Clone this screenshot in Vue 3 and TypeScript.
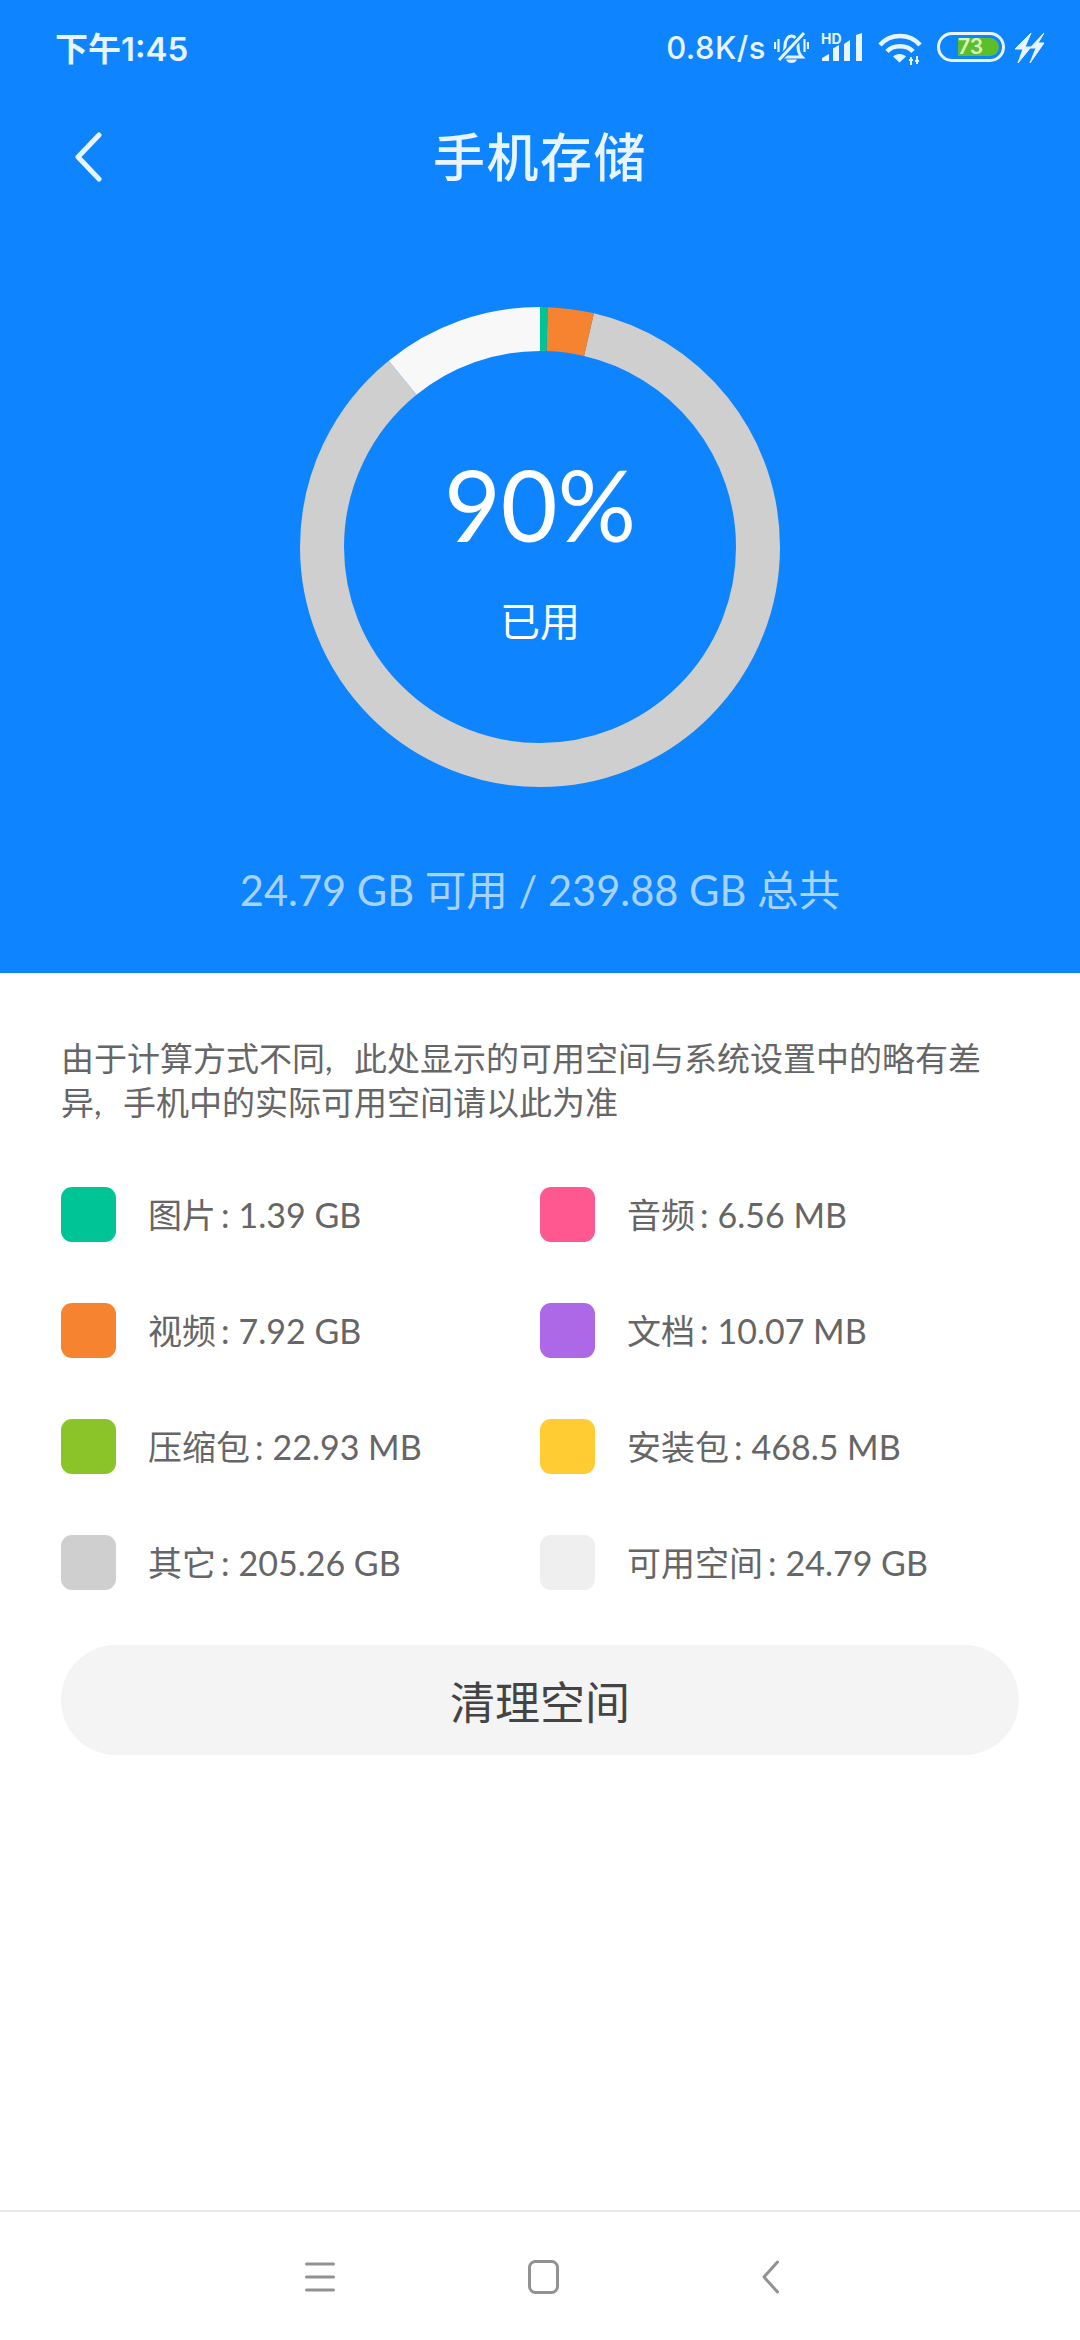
<script setup lang="ts">
interface Seg { color: string; from: number; to: number }
const R = 218
const C = 2 * Math.PI * R
const segs: Seg[] = [
  { color: '#cfcfcf', from: 13, to: 320.8 },
  { color: '#f8f8f8', from: 320.8, to: 360 },
  { color: '#f5832f', from: 1.9, to: 13 },
  { color: '#00c495', from: 0, to: 1.9 },
]
const dash = (s: Seg) => `${((s.to - s.from) / 360) * C} ${C}`
const offset = (s: Seg) => `${-(s.from / 360) * C}`
const legend = [
  { name: '图片', value: '1.39 GB', color: '#00c495' },
  { name: '音频', value: '6.56 MB', color: '#ff5790' },
  { name: '视频', value: '7.92 GB', color: '#f5832f' },
  { name: '文档', value: '10.07 MB', color: '#ad68e8' },
  { name: '压缩包', value: '22.93 MB', color: '#8bc428' },
  { name: '安装包', value: '468.5 MB', color: '#ffcd33' },
  { name: '其它', value: '205.26 GB', color: '#cfcfcf' },
  { name: '可用空间', value: '24.79 GB', color: '#efefef' },
]
</script>

<template>
  <div class="page">
    <section class="top">
      <div class="status">
        <span class="time">下午1:45</span>
        <div class="status-right">
          <span class="speed">0.8K/s</span>
          <svg class="ic bell" width="35" height="33" viewBox="0 0 35 33" fill="none" stroke="#e8f4ff" stroke-width="3">
            <path d="M7 26c3-3 4-6 4-11 0-6 3-10 6.500-10S24 9 24 15c0 5 1 8 4 11z" />
            <path d="M12 28.500h11c-1 2.500-3 3.500-5.500 3.500S13 31 12 28.500z" fill="#e8f4ff" stroke="none" />
            <path d="M4.500 8v13M30.500 8v13M1 11v7M34 11v7" stroke-width="2.200" />
            <path d="M4 30 30 2" stroke="#0e85ff" stroke-width="6" />
            <path d="M5 29 30 2" stroke-width="3" />
          </svg>
          <div class="sig">
            <span class="hd">HD</span>
            <svg class="ic" width="42" height="30" viewBox="0 0 42 30" fill="#e8f4ff">
              <path d="M1 29v-3l7-4v7zM12 29V16.500l6-3.500v16zM23 29V12l6-4v21zM35 29V3l6-2v28z" />
            </svg>
          </div>
          <svg class="ic wifi" width="44" height="32" viewBox="0 0 44 32" fill="none" stroke="#e8f4ff" stroke-width="4.500">
            <path d="M2 12C12 0 32 0 42 12M9 18.500c6-7 20-7 26 0" />
            <path d="M15 23.500c3-3.500 10-3.500 13 0l-6.500 6z" fill="#e8f4ff" stroke="none" />
            <path d="M33 24v8M31 27h4M39 23v8M37 28h4" stroke-width="2" />
          </svg>
          <div class="battery"><div class="battery-fill"></div><span>73</span></div>
          <svg class="ic bolt" width="29" height="30" viewBox="0 0 29 30" fill="#e8f4ff">
            <path d="M16 0 0 16h8L3 30 16 14H10zM29 0 15 15h6l-6 15 14-20h-6z" stroke="#e8f4ff" stroke-width="1" />
          </svg>
        </div>
      </div>
      <header class="title-row">
        <svg class="back" width="28" height="50" viewBox="0 0 28 50" fill="none" stroke="#e8f4ff" stroke-width="5" stroke-linecap="round" stroke-linejoin="round">
          <path d="M25 3 4 25l21 22" />
        </svg>
        <h1>手机存储</h1>
      </header>
      <div class="ring">
        <svg width="480" height="480" viewBox="0 0 480 480">
          <circle
            v-for="s in segs"
            :key="s.color"
            cx="240"
            cy="240"
            :r="R"
            fill="none"
            :stroke="s.color"
            stroke-width="44"
            :stroke-dasharray="dash(s)"
            :stroke-dashoffset="offset(s)"
            transform="rotate(-90 240 240)"
          />
        </svg>
        <div class="ring-center">
          <div class="pct">90%</div>
          <div class="used">已用</div>
        </div>
      </div>
      <p class="summary">24.79 GB 可用 / 239.88 GB 总共</p>
    </section>

    <main class="body">
      <p class="note">由于计算方式不同, 此处显示的可用空间与系统设置中的略有差异, 手机中的实际可用空间请以此为准</p>
      <div class="legend">
        <div v-for="item in legend" :key="item.name" class="item">
          <i class="swatch" :style="{ background: item.color }"></i>
          <span class="item-text">{{ item.name }}<span class="colon">:</span>{{ item.value }}</span>
        </div>
      </div>
      <button class="clean">清理空间</button>
    </main>

    <nav class="nav">
      <svg width="30" height="32" viewBox="0 0 30 32" fill="none" stroke="#929292" stroke-width="3" stroke-linecap="round">
        <path d="M1.500 3h27M1.500 16h27M1.500 29h27" />
      </svg>
      <svg width="31" height="34" viewBox="0 0 31 34" fill="none" stroke="#929292" stroke-width="3">
        <rect x="1.500" y="1.500" width="28" height="31" rx="6" />
      </svg>
      <svg width="17" height="34" viewBox="0 0 17 34" fill="none" stroke="#929292" stroke-width="3" stroke-linecap="round" stroke-linejoin="round">
        <path d="M15.500 2 2 17l13.500 15" />
      </svg>
    </nav>
  </div>
</template>

<style>
html, body { margin: 0; background: #fff; }
</style>

<style scoped>
.page {
  width: 1080px;
  height: 2340px;
  display: flex;
  flex-direction: column;
  font-family: Lato, "Noto Sans CJK SC", sans-serif;
  background: #fff;
  overflow: hidden;
}
.top {
  height: 973px;
  background: #0e85ff;
  display: flex;
  flex-direction: column;
  align-items: center;
  color: #fff;
  flex: none;
}
.status {
  width: 100%;
  box-sizing: border-box;
  height: 96px;
  padding: 0 36px 0 55px;
  display: flex;
  align-items: center;
  justify-content: space-between;
  color: #e8f4ff;
}
.time {
  font-family: Inter, "Noto Sans CJK SC", sans-serif;
  font-size: 33px;
  font-weight: 600;
  margin-top: -3px;
}
.status-right { display: flex; align-items: center; }
.speed {
  font-family: Inter, sans-serif;
  font-size: 31px;
  font-weight: 500;
  letter-spacing: 0.5px;
  margin-right: 8px;
  margin-top: -2px;
}
.ic { display: block; }
.bell { margin-right: 12px; margin-top: -2px; }
.sig { position: relative; margin-right: 15px; margin-top: -3px; }
.hd {
  position: absolute;
  left: 0;
  top: 1px;
  font-family: Inter, sans-serif;
  font-size: 14px;
  line-height: 12px;
  font-weight: 700;
  color: #e8f4ff;
}
.wifi { margin-right: 15px; margin-top: 2px; }
.battery {
  position: relative;
  width: 68px;
  height: 30px;
  box-sizing: border-box;
  border: 3px solid #e8f4ff;
  border-radius: 15px;
  margin-right: 10px;
  margin-top: -2px;
}
.battery-fill {
  position: absolute;
  left: 18px;
  top: 3px;
  bottom: 3px;
  right: 3px;
  background: #5cbf2a;
  border-radius: 0 10px 10px 0;
}
.battery span {
  position: absolute;
  left: 18px;
  top: 0;
  line-height: 24px;
  font-family: Inter, sans-serif;
  font-size: 21px;
  font-weight: 600;
  color: #d8f5c0;
}
.title-row {
  position: relative;
  width: 100%;
  height: 122px;
  display: flex;
  align-items: center;
  justify-content: center;
}
.back { position: absolute; left: 74px; top: 36px; }
h1 {
  margin: 0 0 6px;
  font-size: 52px;
  font-weight: 500;
  color: #e8f4ff;
  letter-spacing: 1.5px;
}
.ring {
  position: relative;
  width: 480px;
  height: 480px;
  margin-top: 89px;
}
.ring svg { display: block; }
.ring-center {
  position: absolute;
  inset: 0;
  display: flex;
  flex-direction: column;
  align-items: center;
}
.pct { margin-top: 137px; font-size: 98px; line-height: 120px; color: #fff; }
.used { margin-top: 32px; font-size: 40px; line-height: 50px; color: #fff; }
.summary {
  margin: 73px 0 0;
  font-size: 41.600px;
  line-height: 60px;
  color: #a9d3ff;
}
.body {
  flex: 1;
  padding: 64px 61px 0;
  color: #666;
}
.note {
  margin: 0;
  max-width: 930px;
  font-size: 33px;
  line-height: 43.500px;
  word-spacing: 13px;
  color: #666;
}
.legend {
  display: grid;
  grid-template-columns: 479px 1fr;
  grid-auto-rows: 55px;
  row-gap: 61px;
  margin-top: 63px;
}
.item { display: flex; align-items: center; gap: 32px; font-size: 34px; color: #666; }
.item-text { margin-top: -3px; }
.colon { margin: 0 9px 0 5px; }
.swatch { width: 55px; height: 55px; border-radius: 11px; flex: none; }
.clean {
  display: block;
  width: 958px;
  height: 110px;
  margin-top: 55px;
  border: 0;
  border-radius: 55px;
  background: #f4f4f4;
  color: #444;
  font: inherit;
  font-size: 45px;
}
.nav {
  height: 130px;
  flex: none;
  border-top: 2px solid #e8e8e8;
  box-sizing: border-box;
  display: flex;
  align-items: center;
  padding: 2px 0 0 305px;
}
.nav svg { display: block; }
.nav svg:nth-child(1) { margin-right: 193px; }
.nav svg:nth-child(2) { margin-right: 203px; }
</style>
